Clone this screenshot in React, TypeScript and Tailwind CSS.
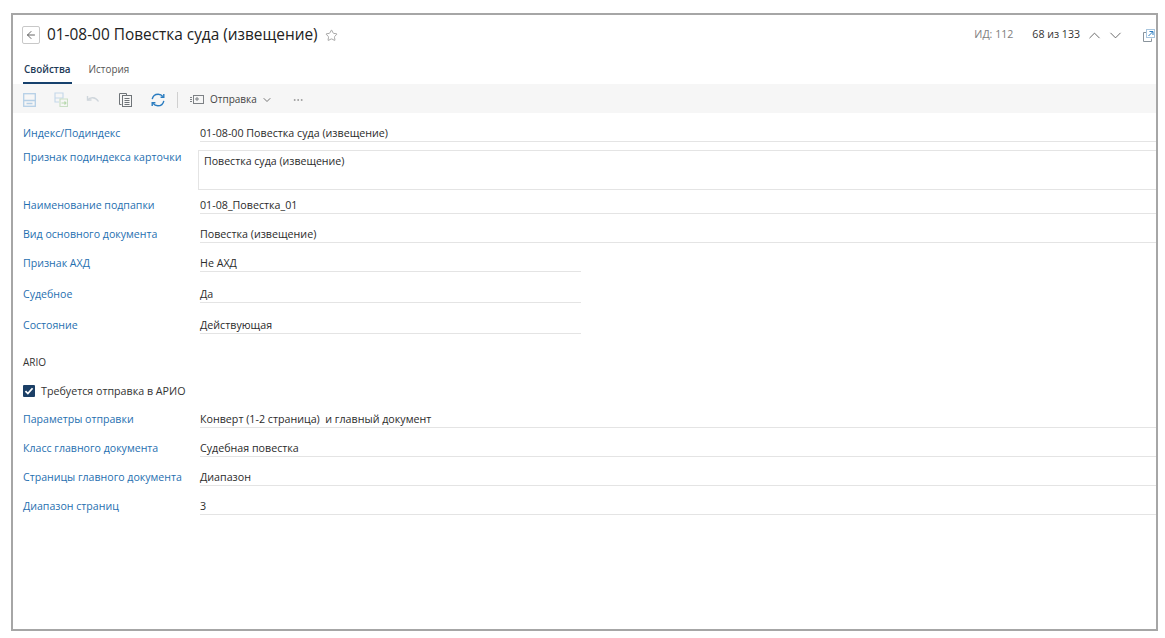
import React from 'react';
import { ArrowLeft, ChevronDown, ChevronUp, MoreHorizontal, Star } from 'lucide-react';

const LABEL = 'w-[177px] shrink-0 text-[#1f6fb0]';

const Field = ({ label, value, narrow, className }: { label: string; value: string; narrow?: boolean; className: string }) => (
  <div className={`flex ${className}`}>
    <div className={`${LABEL} pt-[4px]`}>{label}</div>
    <div className={`h-[20px] whitespace-pre border-b border-[#e4e4e4] pt-[4px] text-[10.7px] leading-[15px] text-[#2b2b2b] ${narrow ? 'w-[381px]' : 'flex-1'}`}>
      {value}
    </div>
  </div>
);

const SaveIcon = () => (
  <svg width="13" height="14" viewBox="0 0 13 14" fill="none" stroke="#b5cfe6" strokeWidth="1.3">
    <rect x=".7" y=".7" width="11.6" height="12.6" />
    <path d="M.7 7.5h11.6M3.5 10.5h6" />
  </svg>
);

const SaveAsIcon = () => (
  <svg width="14" height="15" viewBox="0 0 14 15" fill="none" stroke="#c4d8ea" strokeWidth="1.1">
    <path d="M1 1h8v5H1zM1 6v4h4" />
    <path d="M6 7h7.5v7.5H6z" stroke="#c9dfc4" />
    <path d="M7.5 11h4.5M10.5 9.5L12 11l-1.5 1.5" stroke="#b7d8ad" />
  </svg>
);

const UndoIcon = () => (
  <svg width="14" height="10" viewBox="0 0 14 10" fill="none" stroke="#cfd6dc" strokeWidth="1.4">
    <path d="M1.5 1v4h4" />
    <path d="M1.5 5C4 2 9.5 1.5 12.5 6.5" />
  </svg>
);

const CopyIcon = () => (
  <svg width="13" height="14" viewBox="0 0 13 14" fill="none" stroke="#6f7478" strokeWidth="1">
    <path d="M2.5 11.5h-2V.5h7v2" />
    <rect x="3.5" y="2.5" width="9" height="11" />
    <path d="M5.5 5.5h5M5.5 7.5h5M5.5 9.5h5M5.5 11.5h5" />
  </svg>
);

const RefreshIcon = () => (
  <svg width="14" height="14" viewBox="0 0 14 14" fill="none" stroke="#2a7cc0" strokeWidth="1.4">
    <path d="M1.2 6.2C1.8 3 4.5 1.2 7.2 1.2c2 0 3.6.9 4.8 2.4" />
    <path d="M12.8 1v3.2H9.6" />
    <path d="M12.8 7.8C12.2 11 9.5 12.8 6.8 12.8c-2 0-3.6-.9-4.8-2.4" />
    <path d="M1.2 13V9.8h3.2" />
  </svg>
);

const SendIcon = () => (
  <svg width="14" height="9" viewBox="0 0 14 9" fill="none" stroke="#7d8185" strokeWidth="1">
    <rect x="3.5" y=".5" width="10" height="8" />
    <path d="M0 2.5h2M0 4.5h2M0 6.5h2M6 3h2v2H6z" />
  </svg>
);

const OpenIcon = () => (
  <svg width="12" height="13" viewBox="0 0 12 13" fill="none" strokeWidth="1">
    <path d="M3.5 3.5H.5v9h8v-3" stroke="#8a949c" />
    <rect x="3.5" y=".5" width="8" height="8" stroke="#a9c6de" />
    <path d="M5.5 7l4-4M6.5 2.5h3.5v3.5" stroke="#2a7cc0" />
  </svg>
);

export default function App() {
  return (
    <div className="h-[638px] w-[1165px] overflow-hidden bg-white pl-[11px] pt-[13px] font-['Open_Sans',sans-serif] text-[10.6px]">
      <div className="h-[618px] w-[1147px] overflow-hidden border-2 border-[#a6a6a6] bg-white">
        <header className="flex h-[40px] items-center pl-[9px]">
          <button className="flex h-[18px] w-[18px] items-center justify-center rounded-[2px] border border-[#c8c8c8] text-[#555]">
            <ArrowLeft size={12} strokeWidth={1.8} />
          </button>
          <h1 className="ml-[7px] text-[15.4px] leading-none text-[#222]">01-08-00 Повестка суда (извещение)</h1>
          <Star size={13} className="ml-[7px] text-[#9a9a9a]" strokeWidth={1.6} />
          <div className="ml-auto flex items-center pr-[1px]">
            <span className="text-[#7d7d7d]">ИД: 112</span>
            <span className="ml-[19px] text-[#333]">68 из 133</span>
            <ChevronUp size={19} strokeWidth={1.1} className="ml-[5px] text-[#555]" />
            <ChevronDown size={19} strokeWidth={1.1} className="ml-[2px] text-[#555]" />
            <span className="ml-[18px] flex"><OpenIcon /></span>
          </div>
        </header>

        <nav className="flex h-[29px] pl-[10px]">
          <div className="border-b-[2px] border-[#16416d] px-[1px] pt-[7px] text-[9.9px] font-semibold text-[#1d3a57]">Свойства</div>
          <div className="ml-[17px] pt-[7px] text-[9.9px] text-[#555]">История</div>
        </nav>

        <div className="flex h-[29px] items-center bg-[#f6f6f6] pl-[10px] pt-[2px] text-[#444]">
          <span className="flex w-[31px]"><SaveIcon /></span>
          <span className="flex w-[32px]"><SaveAsIcon /></span>
          <span className="flex w-[33px]"><UndoIcon /></span>
          <span className="flex w-[32px]"><CopyIcon /></span>
          <span className="flex w-[26px]"><RefreshIcon /></span>
          <span className="h-[16px] w-px bg-[#d0d0d0]" />
          <span className="ml-[12px] flex"><SendIcon /></span>
          <span className="ml-[6px] text-[10px]">Отправка</span>
          <ChevronDown size={12} strokeWidth={1.8} className="ml-[4px] text-[#666]" />
          <MoreHorizontal size={12} strokeWidth={1.5} className="ml-[19px] text-[#8a8a8a]" />
        </div>

        <main className="pl-[10px]">
          <Field className="mt-[9px]" label="Индекс/Подиндекс" value="01-08-00 Повестка суда (извещение)" />
          <div className="mt-[8px] flex">
            <div className={LABEL}>Признак подиндекса карточки</div>
            <div className="ml-[-2px] h-[40px] flex-1 border-y border-l border-[#e4e4e4] pl-[5px] pt-[3px] text-[10.6px] text-[#2b2b2b]">Повестка суда (извещение)</div>
          </div>
          <Field className="mt-[4px]" label="Наименование подпапки" value="01-08_Повестка_01" />
          <Field className="mt-[9px]" label="Вид основного документа" value="Повестка (извещение)" />
          <Field className="mt-[9px]" narrow label="Признак АХД" value="Не АХД" />
          <Field className="mt-[11px]" narrow label="Судебное" value="Да" />
          <Field className="mt-[11px]" narrow label="Состояние" value="Действующая" />

          <div className="mt-[21px] text-[10px] text-[#333]">ARIO</div>

          <label className="mt-[13px] flex h-[16px] items-center text-[10.7px] text-[#333]">
            <span className="flex h-[12px] w-[12px] items-center justify-center rounded-[1px] bg-[#1b3f66]">
              <svg width="10" height="10" viewBox="0 0 9 9" fill="none" stroke="#fff" strokeWidth="1.6">
                <path d="M1.3 4.6l2.2 2.2 4.2-4.8" />
              </svg>
            </span>
            <span className="ml-[6px]">Требуется отправка в АРИО</span>
          </label>

          <Field className="mt-[9px]" label="Параметры отправки" value="Конверт (1-2 страница)  и главный документ" />
          <Field className="mt-[9px]" label="Класс главного документа" value="Судебная повестка" />
          <Field className="mt-[9px]" label="Страницы главного документа" value="Диапазон" />
          <Field className="mt-[9px]" label="Диапазон страниц" value="3" />
        </main>
      </div>
    </div>
  );
}
